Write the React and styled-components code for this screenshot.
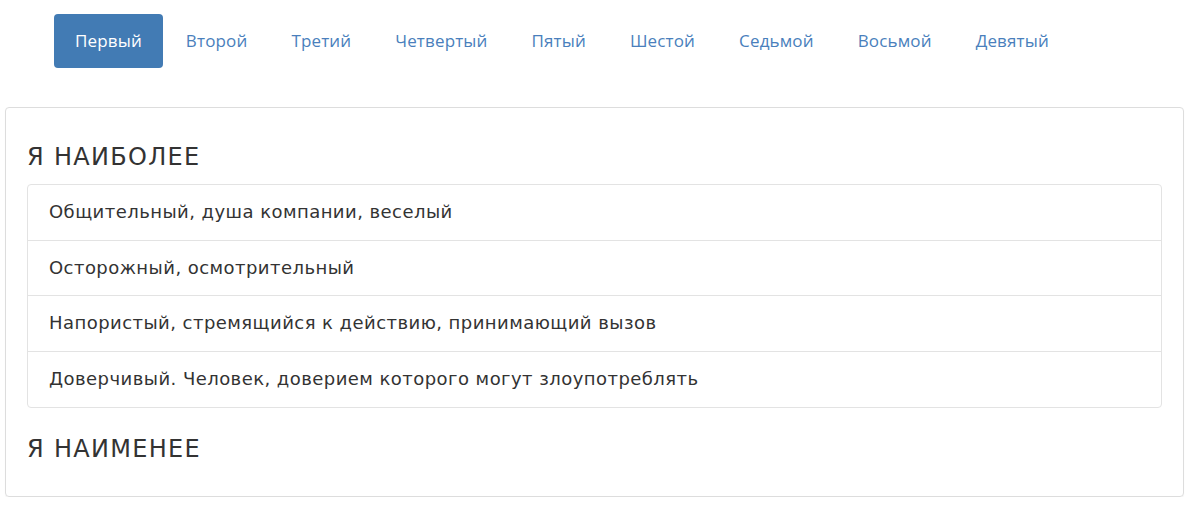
import React, {useState} from 'react';
import styled, {createGlobalStyle} from 'styled-components';

const GlobalStyle = createGlobalStyle`
  * {
    box-sizing: border-box;
  }
  body {
    margin: 0;
    background: #fff;
    color: #333;
    font-family: 'DejaVu Sans', sans-serif;
  }
`;

const tabs = [
  'Первый',
  'Второй',
  'Третий',
  'Четвертый',
  'Пятый',
  'Шестой',
  'Седьмой',
  'Восьмой',
  'Девятый',
];

const most = [
  'Общительный, душа компании, веселый',
  'Осторожный, осмотрительный',
  'Напористый, стремящийся к действию, принимающий вызов',
  'Доверчивый. Человек, доверием которого могут злоупотреблять',
];

const Pills = styled.ul`
  list-style: none;
  display: flex;
  margin: 0;
  padding: 14px 0 0 54px;
  height: 107px;
`;

const Pill = styled.li`
  margin-left: ${({$first}) => ($first ? '0' : '2px')};
  a {
    display: block;
    height: 54px;
    padding: 14px 21px;
    border-radius: 4px;
    font-family: 'Open Sans', sans-serif;
    font-size: 17px;
    letter-spacing: 0.15px;
    line-height: 26px;
    text-decoration: none;
    cursor: pointer;
    color: ${({$active}) => ($active ? '#fff' : '#4a7fbc')};
    background: ${({$active}) => ($active ? '#427bb4' : 'transparent')};
  }
`;

const Panel = styled.section`
  margin: 0 16px 0 5px;
  padding: 36px 21px 34px;
  border: 1px solid #ddd;
  border-radius: 4px;
  box-shadow: 0 1px 1px rgba(0, 0, 0, 0.05);
`;

const Heading = styled.h3`
  margin: 0 0 ${({$last}) => ($last ? '0' : '14px')};
  font-size: 24px;
  font-weight: 400;
  letter-spacing: 1.3px;
  line-height: 26px;
  color: #333;
`;

const ListGroup = styled.ul`
  list-style: none;
  margin: 0 0 28px;
  padding: 0;
  border: 1px solid #e3e3e3;
  border-radius: 4px;
`;

const ListItem = styled.li`
  padding: 15px 21px;
  font-size: 18px;
  letter-spacing: 0.45px;
  line-height: 24.7px;
  color: #333;
  & + & {
    border-top: 1px solid #e3e3e3;
  }
`;

const App = () => {
  const [active, setActive] = useState(0);

  return (
    <>
      <GlobalStyle />
      <Pills>
        {tabs.map((tab, i) => (
          <Pill key={tab} $first={i === 0} $active={i === active}>
            <a onClick={() => setActive(i)}>{tab}</a>
          </Pill>
        ))}
      </Pills>
      <Panel>
        <Heading>Я НАИБОЛЕЕ</Heading>
        <ListGroup>
          {most.map(item => (
            <ListItem key={item}>{item}</ListItem>
          ))}
        </ListGroup>
        <Heading $last>Я НАИМЕНЕЕ</Heading>
      </Panel>
    </>
  );
};

export default App;
